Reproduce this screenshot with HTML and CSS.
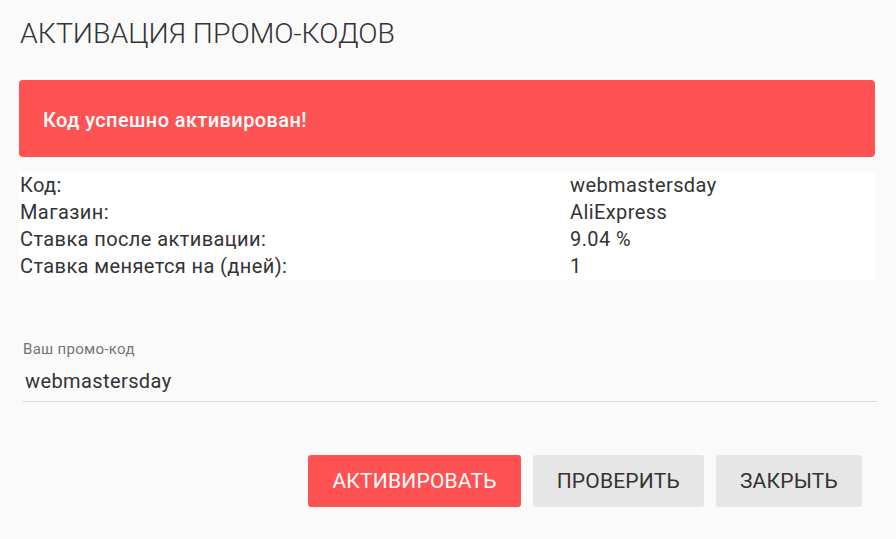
FILE: index.html
```
<!DOCTYPE html>
<html lang="ru">
<head>
<meta charset="utf-8">
<title>Активация промо-кодов</title>
<link rel="stylesheet" href="styles.css">
</head>
<body>
<div class="page">
  <h1 class="title">АКТИВАЦИЯ ПРОМО-КОДОВ</h1>
  <div class="alert">Код успешно активирован!</div>
  <div class="info">
    <div class="row"><span class="key">Код:</span><span class="val">webmastersday</span></div>
    <div class="row"><span class="key">Магазин:</span><span class="val">AliExpress</span></div>
    <div class="row"><span class="key">Ставка после активации:</span><span class="val">9.04 %</span></div>
    <div class="row"><span class="key">Ставка меняется на (дней):</span><span class="val">1</span></div>
  </div>
  <div class="field">
    <label class="field-label" for="code">Ваш промо-код</label>
    <input class="field-input" id="code" type="text" value="webmastersday">
  </div>
  <div class="actions">
    <button class="btn btn-primary">АКТИВИРОВАТЬ</button>
    <button class="btn btn-secondary">ПРОВЕРИТЬ</button>
    <button class="btn btn-secondary">ЗАКРЫТЬ</button>
  </div>
</div>
</body>
</html>
```
FILE: styles.css
```
html, body {
  margin: 0;
  padding: 0;
  background: #fafafa;
}
body {
  font-family: Roboto, "Noto Sans", "Liberation Sans", sans-serif;
  color: #333;
}
.page {
  width: 856px;
  padding: 16px 0 0 19px;
}
.title {
  margin: 0;
  font-size: 28.4px;
  font-weight: 300;
  line-height: 36px;
  color: #333;
  padding-left: 1px;
}
.alert {
  margin-top: 28px;
  background: #ff5252;
  color: #fff;
  border-radius: 4px;
  font-size: 20px;
  font-weight: 500;
  letter-spacing: 0.4px;
  line-height: 25px;
  padding: 28px 24px 24px;
}
.info {
  margin-top: 15px;
  background: #fff;
}
.row {
  display: flex;
  height: 27px;
  line-height: 27px;
  font-size: 20px;
  letter-spacing: 0.4px;
  color: #333;
}
.key {
  width: 550px;
  padding-left: 1px;
}
.val {
  flex: 1;
}
.field {
  margin: 60px -2px 0 3px;
  display: flex;
  flex-direction: column;
}
.field-label {
  font-size: 15px;
  letter-spacing: 0.3px;
  line-height: 18px;
  color: #757575;
  padding-left: 1px;
}
.field-input {
  box-sizing: border-box;
  margin-top: 9px;
  font-family: Roboto, "Noto Sans", "Liberation Sans", sans-serif;
  font-size: 20px;
  letter-spacing: 0.4px;
  line-height: 28px;
  height: 35px;
  padding: 0 0 6px 3px;
  border: none;
  border-bottom: 1px solid #dcdcdc;
  background: transparent;
  color: #333;
  outline: none;
}
.actions {
  margin-top: 53px;
  display: flex;
  justify-content: flex-end;
  gap: 12px;
  padding-right: 13px;
}
.btn {
  height: 52px;
  padding: 0 24px;
  border: none;
  border-radius: 3px;
  font-family: Roboto, "Noto Sans", "Liberation Sans", sans-serif;
  font-size: 21px;
  letter-spacing: 0.2px;
  font-weight: 400;
  cursor: pointer;
}
.btn-primary {
  background: #ff5252;
  color: #fff;
}
.btn-secondary {
  background: #e6e6e6;
  color: #333;
}
```
